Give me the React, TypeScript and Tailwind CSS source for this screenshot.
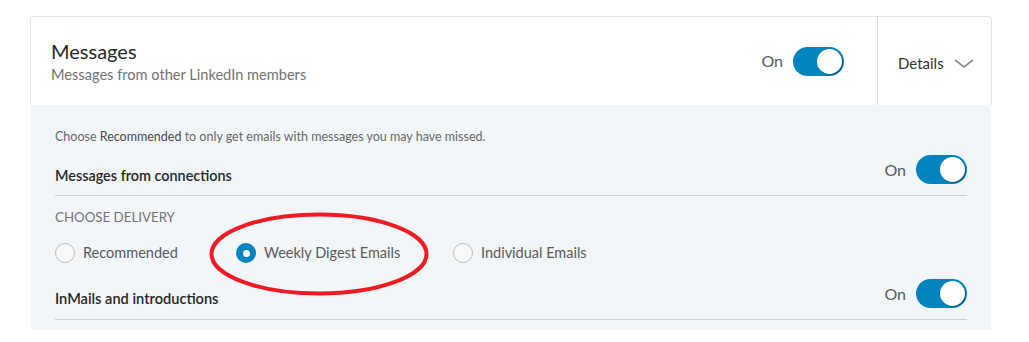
import { useState } from "react"

const Toggle = ({ on }: { on: boolean }) => (
  <div className="flex items-center gap-[10px]">
    <span className="text-[16px] leading-5 text-[#595959]">{on ? "On" : "Off"}</span>
    <div className="relative w-[51px] h-[29px] rounded-full bg-[#0084bf]">
      <div className="absolute right-[2px] top-[2px] w-[25px] h-[25px] rounded-full bg-white shadow-[1px_1px_1px_rgba(0,0,0,0.35)]" />
    </div>
  </div>
)

const Radio = ({ checked, label }: { checked: boolean; label: string }) => (
  <div className="flex items-center gap-2">
    {checked ? (
      <span className="w-5 h-5 rounded-full bg-[#0084bf] flex items-center justify-center">
        <span className="w-[7px] h-[7px] rounded-full bg-white" />
      </span>
    ) : (
      <span className="w-5 h-5 rounded-full border border-[#b9b9b9] bg-[#f7f9fa]" />
    )}
    <span className="text-[14.5px] leading-5 text-[#595959]">{label}</span>
  </div>
)

export default function App() {
  const [delivery] = useState("weekly")

  return (
    <div className="w-[1029px] h-[342px] bg-white font-['Lato',sans-serif] pt-4 pl-[30px]">
      <div className="w-[962px]">
        {/* header */}
        <div className="flex h-[89px] border border-b-0 border-[#e2e4e6] rounded-t-sm">
          <div className="flex-1 flex items-center justify-between pl-5 pr-[33px]">
            <div className="flex flex-col">
              <h2 className="text-[20px] leading-6 text-[#262626]">Messages</h2>
              <p className="mt-[3px] text-[14.6px] leading-[18px] text-[#737373]">
                Messages from other LinkedIn members
              </p>
            </div>
            <Toggle on />
          </div>
          <div className="w-[114px] border-l border-[#dcdcdc] flex items-center pl-5 gap-[10px] pt-[4px]">
            <span className="text-[15px] leading-5 text-[#333]">Details</span>
            <svg width="20" height="9" viewBox="0 0 20 9" fill="none">
              <path d="M1 1l9 7 9-7" stroke="#8c8c8c" strokeWidth="1.6" />
            </svg>
          </div>
        </div>

        {/* expanded panel */}
        <div className="mx-[1px] bg-[#f3f6f8] px-6 pt-[24px] pb-[10px]">
          <p className="text-[12.5px] leading-4 text-[#666]">
            Choose <span className="text-[#4a4a4a]">Recommended</span> to only get emails with messages you may have missed.
          </p>

          <div className="flex items-end justify-between pt-[10px] pb-[11px] border-b border-[#cdcfd2]">
            <span className="text-[14.4px] leading-[17px] font-semibold text-[#262626]">Messages from connections</span>
            <Toggle on />
          </div>

          <p className="pt-[11px] text-[13.3px] leading-5 text-[#737373] uppercase">Choose delivery</p>

          <div className="flex mt-[16px]">
            <div className="w-[181px]">
              <Radio checked={delivery === "recommended"} label="Recommended" />
            </div>
            <div className="w-[217px] relative">
              <Radio checked={delivery === "weekly"} label="Weekly Digest Emails" />
              <svg
                className="absolute left-[-27px] top-[-31px] pointer-events-none"
                width="220"
                height="84"
                viewBox="0 0 220 84"
                fill="none"
              >
                <ellipse cx="110" cy="42" rx="107.5" ry="39.5" stroke="#ed1c24" strokeWidth="4" />
              </svg>
            </div>
            <div>
              <Radio checked={delivery === "individual"} label="Individual Emails" />
            </div>
          </div>

          <div className="flex items-end justify-between pt-[16px] pb-[11px] border-b border-[#cdcfd2]">
            <span className="text-[14.6px] leading-[18px] font-semibold text-[#262626]">InMails and introductions</span>
            <Toggle on />
          </div>
        </div>
      </div>
    </div>
  )
}
